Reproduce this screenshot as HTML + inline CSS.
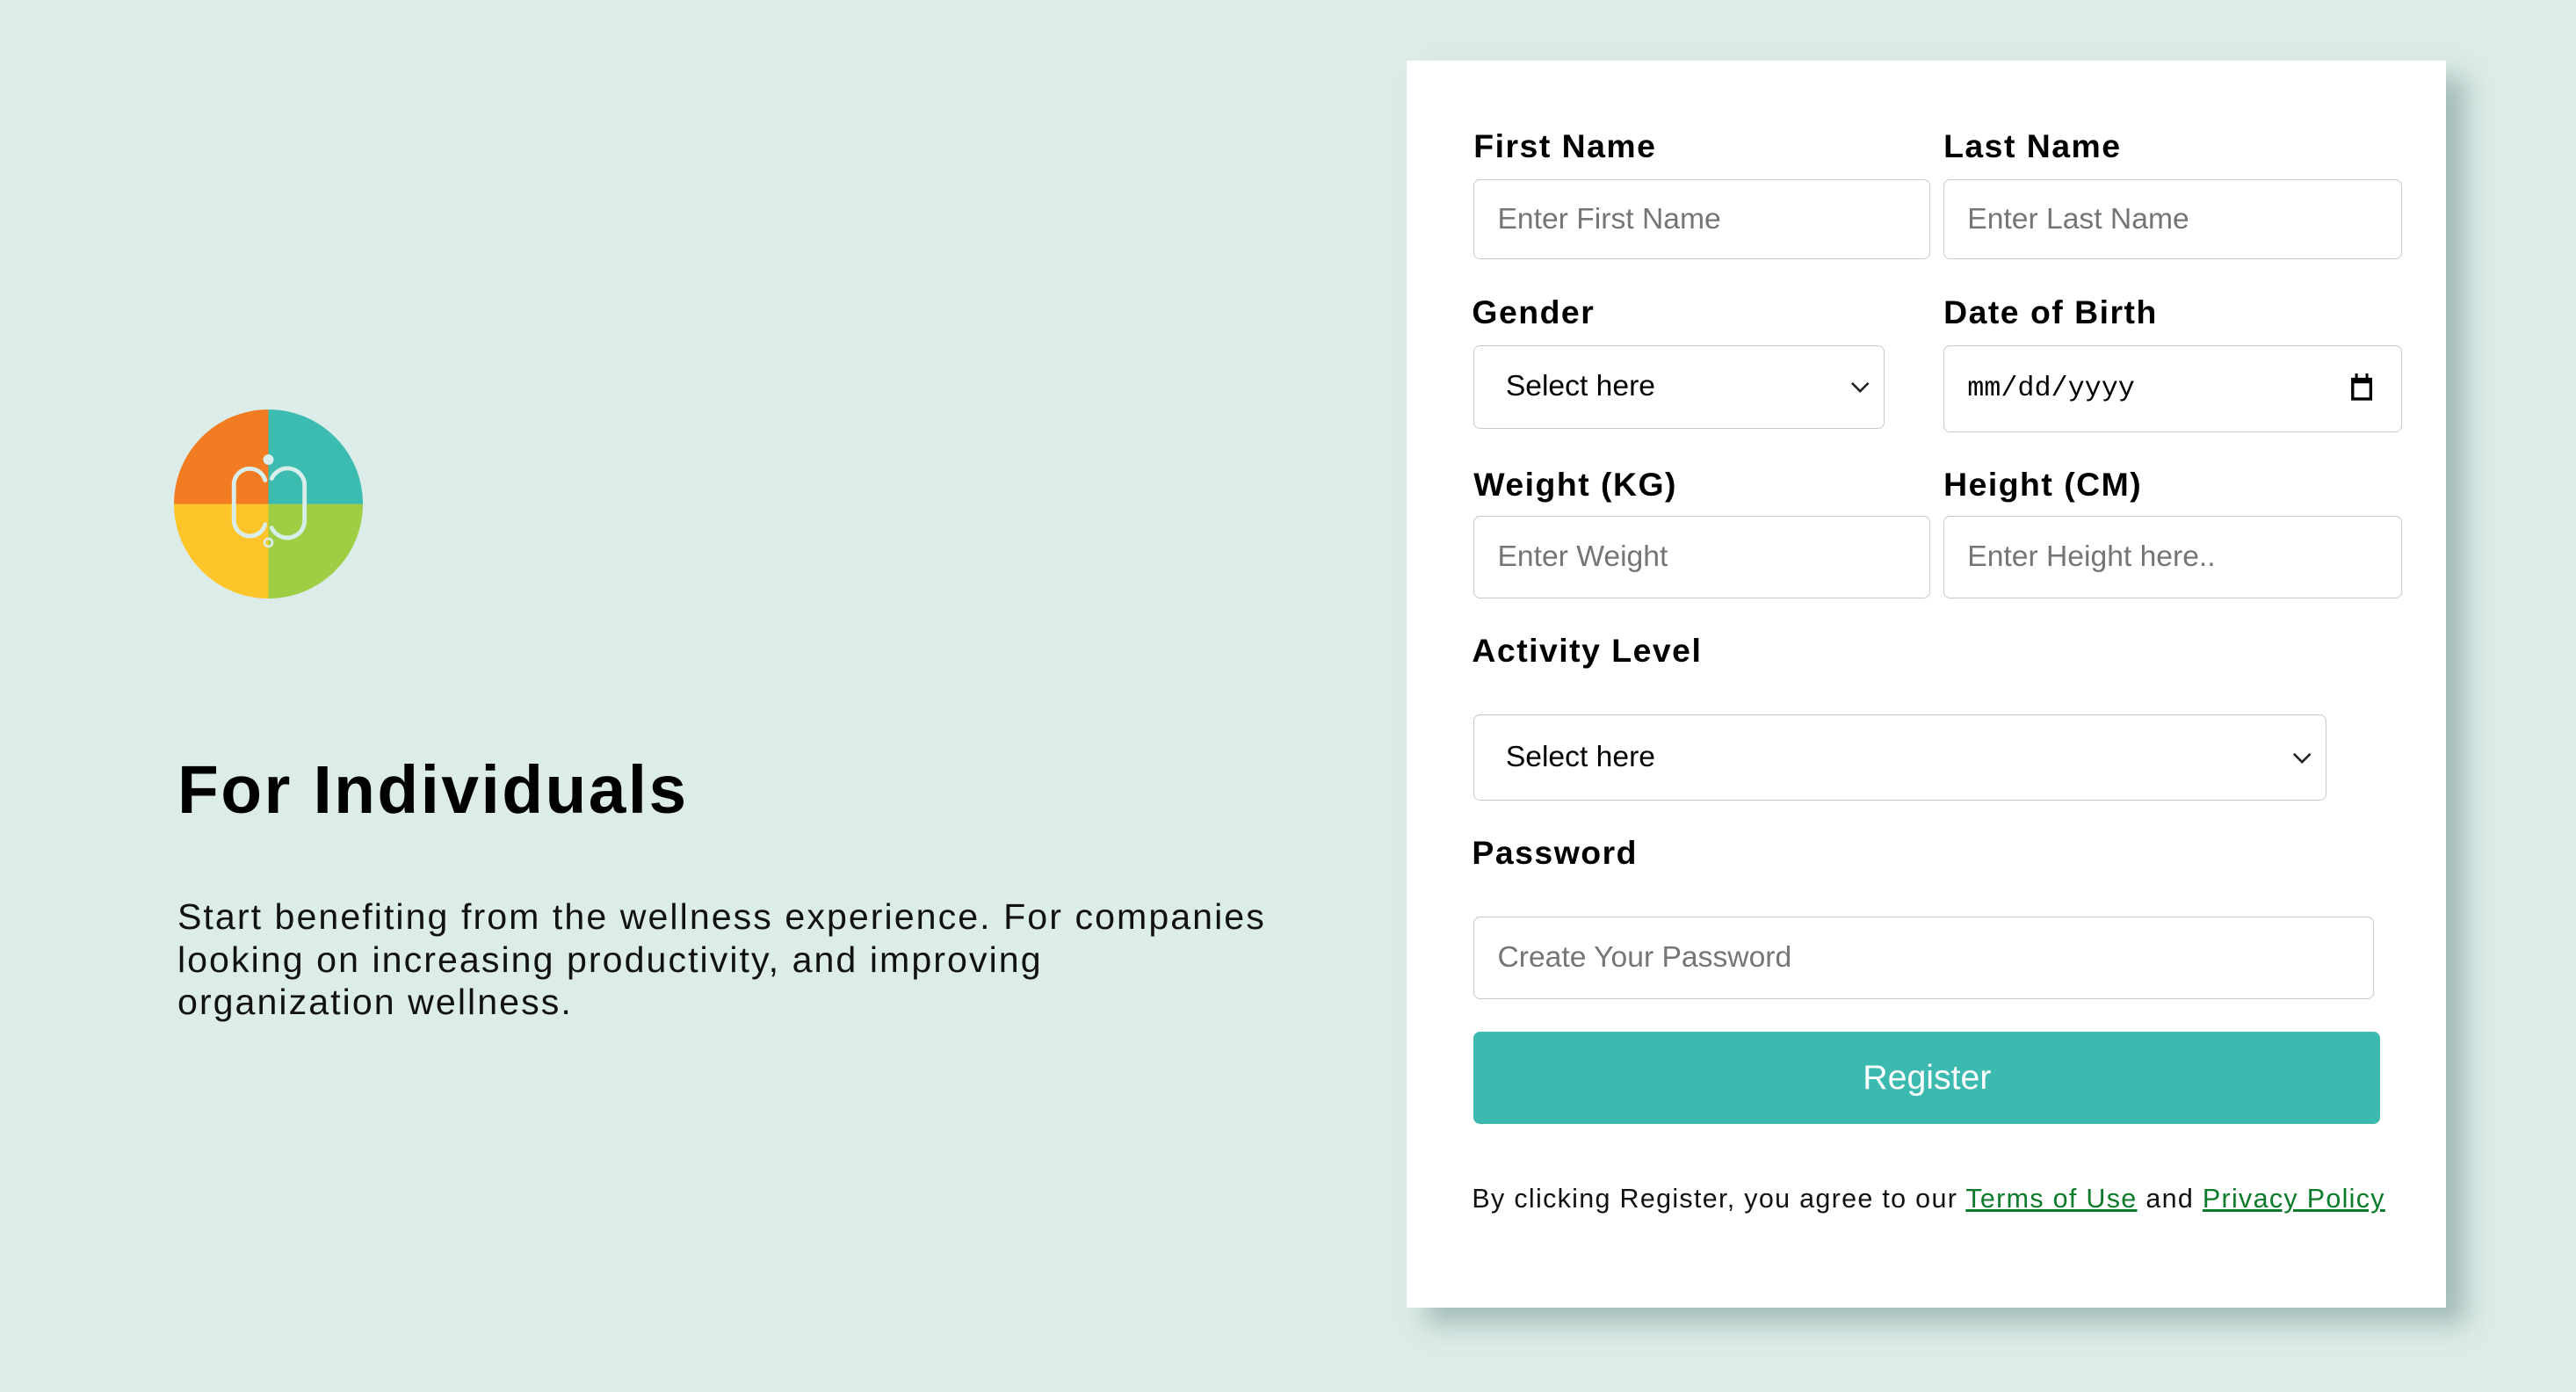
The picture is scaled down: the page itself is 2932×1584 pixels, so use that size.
<!DOCTYPE html>
<html><head><meta charset="utf-8"><style>
html,body{margin:0;padding:0}
body{width:1568px;height:847px;zoom:1.86990;background:#dcece8;position:relative;overflow:hidden;font-family:"Liberation Sans",sans-serif;color:#000}
.a{position:absolute}
.card{left:856px;top:37px;width:633px;height:759px;background:#fff;box-shadow:12px 10px 14px rgba(120,150,145,.55)}
.lbl{font-weight:bold;font-size:20px;line-height:24px;letter-spacing:0.8px}
.in{border:1px solid #c9c9c9;border-radius:4px;box-sizing:border-box;font-size:18px;color:#757575;padding-left:14px;display:flex;align-items:center;background:#fff}
.sel{color:#000;padding-left:19px}
.chev{position:absolute;right:8px;top:50%;margin-top:-4px}
</style></head><body>
<svg class="a" style="left:106px;top:249px" width="115" height="115" viewBox="0 0 115 115">
<defs><clipPath id="c"><circle cx="57.5" cy="57.5" r="57.5"/></clipPath></defs>
<g clip-path="url(#c)">
<rect x="0" y="0" width="57.5" height="57.5" fill="#f27c22"/>
<rect x="57.5" y="0" width="57.5" height="57.5" fill="#3cbcb1"/>
<rect x="0" y="57.5" width="57.5" height="57.5" fill="#fec52a"/>
<rect x="57.5" y="57.5" width="57.5" height="57.5" fill="#9fcd44"/>
</g>
<g fill="none" stroke="#d9eeea" stroke-width="2.6" stroke-linecap="round">
<path d="M55.5 43 A9.7 9.7 0 0 0 36.5 45 V68 A9.7 9.7 0 0 0 55.5 70"/>
<path d="M59.5 42 A10.5 10.5 0 0 1 79.5 45 V68 A10.5 10.5 0 0 1 59.5 72"/>
<circle cx="57.5" cy="81" r="2.4" stroke-width="1.4"/>
</g>
<circle cx="57.5" cy="30.5" r="3.2" fill="#d9eeea"/>
</svg>
<div class="a" style="left:108px;top:456px;font-size:41px;font-weight:bold;line-height:50px;letter-spacing:1.3px">For Individuals</div>
<div class="a" style="left:108px;top:545px;width:720px;font-size:22px;line-height:26px;color:#111;letter-spacing:1.1px">Start benefiting from the wellness experience. For companies<br>looking on increasing productivity, and improving<br>organization wellness.</div>

<div class="a card"></div>
<div class="a lbl" style="left:897px;top:77px">First Name</div>
<div class="a lbl" style="left:1183px;top:77px">Last Name</div>
<div class="a in" style="left:897px;top:109px;width:278px;height:49px">Enter First Name</div>
<div class="a in" style="left:1183px;top:109px;width:279px;height:49px">Enter Last Name</div>
<div class="a lbl" style="left:896px;top:178px">Gender</div>
<div class="a lbl" style="left:1183px;top:178px">Date of Birth</div>
<div class="a in sel" style="left:897px;top:210px;width:250px;height:51px">Select here<svg class="chev" width="12" height="8" viewBox="0 0 12 8"><path d="M1 1.5 L6 6.5 L11 1.5" fill="none" stroke="#222" stroke-width="1.4"/></svg></div>
<div class="a in" style="left:1183px;top:210px;width:279px;height:53px;color:#000;font-family:'Liberation Mono',monospace;font-size:17px">mm/dd/yyyy<svg class="chev" style="right:17px;margin-top:-9px" width="14" height="17" viewBox="0 0 14 17"><rect x="1.5" y="3.5" width="11" height="12" fill="none" stroke="#000" stroke-width="1.8"/><rect x="1" y="3" width="12" height="3" fill="#000"/><rect x="3" y="0" width="1.6" height="4" fill="#000"/><rect x="9.4" y="0" width="1.6" height="4" fill="#000"/></svg></div>
<div class="a lbl" style="left:897px;top:283px">Weight (KG)</div>
<div class="a lbl" style="left:1183px;top:283px">Height (CM)</div>
<div class="a in" style="left:897px;top:314px;width:278px;height:50px">Enter Weight</div>
<div class="a in" style="left:1183px;top:314px;width:279px;height:50px">Enter Height here..</div>
<div class="a lbl" style="left:896px;top:384px">Activity Level</div>
<div class="a in sel" style="left:897px;top:435px;width:519px;height:52px">Select here<svg class="chev" width="12" height="8" viewBox="0 0 12 8"><path d="M1 1.5 L6 6.5 L11 1.5" fill="none" stroke="#222" stroke-width="1.4"/></svg></div>
<div class="a lbl" style="left:896px;top:507px">Password</div>
<div class="a in" style="left:897px;top:558px;width:548px;height:50px">Create Your Password</div>
<div class="a" style="left:897px;top:628px;width:552px;height:56px;background:#3dbab0;border-radius:4px;color:#fff;font-size:21px;display:flex;align-items:center;justify-content:center">Register</div>
<div class="a" style="left:896px;top:720px;font-size:16.3px;line-height:20px;color:#111;letter-spacing:0.7px;white-space:nowrap">By clicking Register, you agree to our <span style="color:#0b7a2a;text-decoration:underline">Terms of Use</span> and <span style="color:#0b7a2a;text-decoration:underline">Privacy Policy</span></div>
</body></html>
